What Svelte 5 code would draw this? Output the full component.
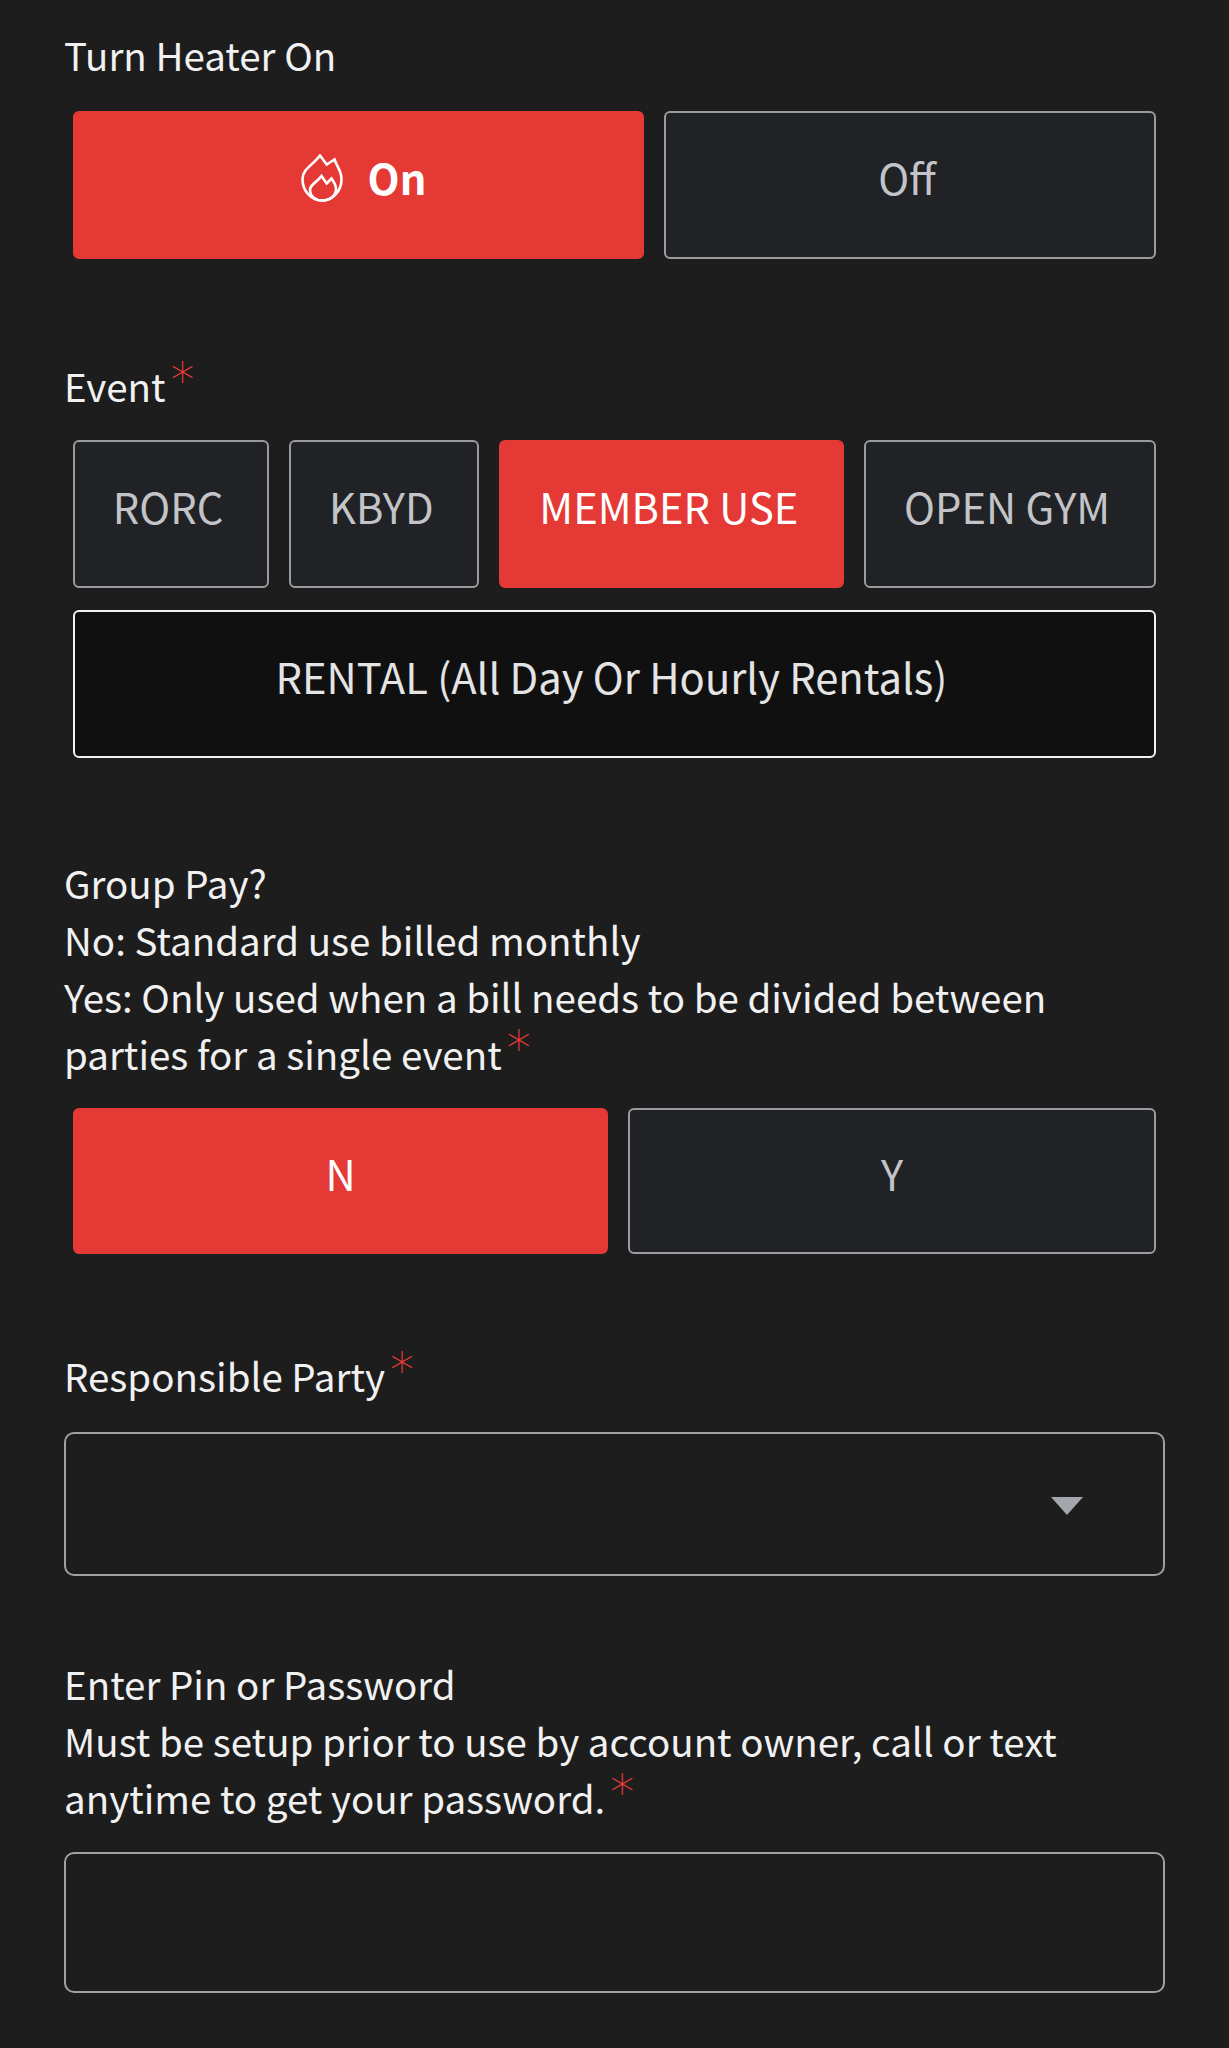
<script>
  let heater = $state("on");
  let eventType = $state("MEMBER USE");
  let groupPay = $state("N");
  let party = $state("");
  let pin = $state("");

  const events = ["RORC", "KBYD", "MEMBER USE", "OPEN GYM", "RENTAL (All Day Or Hourly Rentals)"];
</script>

<main>
  <section class="field first">
    <div class="label">Turn Heater On</div>
    <div class="options">
      <button class="opt heater" class:active={heater === "on"} onclick={() => (heater = "on")}>
        <svg class="flame" viewBox="0 0 42 48" width="42" height="48" fill="none" stroke="currentColor" stroke-width="2.6">
          <path d="M19 1.5 L25.7 10.5 L33.5 5.5 C36 13 40.5 17 40.5 25 C40.5 37 32 46.5 21 46.5 C10 46.5 1.5 37 1.5 25 C1.5 15 12 11 19 1.5 Z" />
          <path d="M20.5 22 L25.7 29.5 L30.5 24.5 C33 28 35 31 35 35 C35 42 29 46.5 21 46.5 C14 46.5 9 42 9 36 C9 30 16 28.5 20.5 22 Z" />
        </svg>
        <span>On</span>
      </button>
      <button class="opt off" class:active={heater === "off"} onclick={() => (heater = "off")}>Off</button>
    </div>
  </section>

  <section class="field event">
    <div class="label">Event<span class="req">*</span></div>
    <div class="options wrap">
      {#each events as ev}
        <button
          class="opt"
          class:active={eventType === ev}
          class:dark={ev.startsWith("RENTAL")}
          onclick={() => (eventType = ev)}
        >{ev}</button>
      {/each}
    </div>
  </section>

  <section class="field group">
    <div class="label">
      Group Pay?<br />
      No: Standard use billed monthly<br />
      Yes: Only used when a bill needs to be divided between<br />
      parties for a single event<span class="req">*</span>
    </div>
    <div class="options yes-no">
      <button class="opt yn n" class:active={groupPay === "N"} onclick={() => (groupPay = "N")}>N</button>
      <button class="opt yn y" class:active={groupPay === "Y"} onclick={() => (groupPay = "Y")}>Y</button>
    </div>
  </section>

  <section class="field party">
    <div class="label">Responsible Party<span class="req">*</span></div>
    <div class="select">
      <input type="text" bind:value={party} />
      <span class="caret"></span>
    </div>
  </section>

  <section class="field pin">
    <div class="label">
      Enter Pin or Password<br />
      Must be setup prior to use by account owner, call or text<br />
      anytime to get your password.<span class="req">*</span>
    </div>
    <input class="text" type="password" bind:value={pin} />
  </section>
</main>

<style>
  :global(body) {
    margin: 0;
    background: #1d1d1e;
  }

  main {
    box-sizing: border-box;
    height: 2048px;
    padding: 26px 64px 0;
    width: 1229px;
    font-family: "Noto Sans CJK JP", "Noto Sans", sans-serif;
    color: #f1f1f1;
  }

  .label {
    font-size: 38.5px;
    line-height: 57px;
    font-weight: 400;
  }

  .req {
    color: #ea3b37;
    font-family: "DejaVu Sans", sans-serif;
    font-weight: 200;
    font-size: 48px;
    line-height: 0;
    margin-left: 5px;
    position: relative;
    top: -5px;
  }

  .options {
    display: flex;
    gap: 20px;
    margin: 28px 9px 0;
  }

  .wrap {
    flex-wrap: wrap;
    gap: 22px 20px;
    margin-top: 26px;
  }

  .yes-no {
    margin-top: 26px;
  }

  .opt {
    box-sizing: border-box;
    height: 148px;
    flex: 1 1 auto;
    padding: 0 43px 17px 37px;
    border: 2.5px solid #9a9b9e;
    border-radius: 6px;
    background: #212226;
    color: #c3c4c8;
    font: inherit;
    font-size: 41.7px;
    cursor: pointer;
  }

  .opt.active {
    background: #e53935;
    border-color: #e53935;
    color: #fff;
  }

  .opt.dark {
    flex-basis: 100%;
    background: #101011;
    border-color: #f0f0f0;
    color: #e4e4e4;
  }

  .heater {
    flex: 0 0 571px;
    display: flex;
    align-items: center;
    justify-content: center;
    gap: 25px;
    padding: 0 40px 17px;
  }

  .heater span {
    font-weight: 700;
  }

  .flame {
    display: block;
    margin-left: 10px;
    margin-top: 2px;
  }

  .off {
    flex: 1 1 0;
  }

  .yn {
    height: 146px;
    padding: 0 40px 17px;
  }

  .n {
    flex: 0 0 535px;
  }

  .y {
    flex: 1 1 0;
  }

  .event {
    margin-top: 98px;
  }

  .group {
    margin-top: 96px;
  }

  .party {
    margin-top: 93px;
  }

  .pin {
    margin-top: 79px;
  }

  .select {
    position: relative;
    margin-top: 28px;
  }

  .select input,
  .text {
    display: block;
    box-sizing: border-box;
    width: 100%;
    height: 144px;
    padding: 0 20px;
    border: 2.5px solid #a0a0a0;
    border-radius: 10px;
    background: transparent;
    color: #fff;
    font: inherit;
    font-size: 38px;
    outline: none;
  }

  .text {
    margin-top: 26px;
    height: 141px;
  }

  .caret {
    position: absolute;
    right: 82px;
    top: 65px;
    width: 0;
    height: 0;
    border-left: 16px solid transparent;
    border-right: 16px solid transparent;
    border-top: 18px solid #a3a7ad;
    pointer-events: none;
  }
</style>
